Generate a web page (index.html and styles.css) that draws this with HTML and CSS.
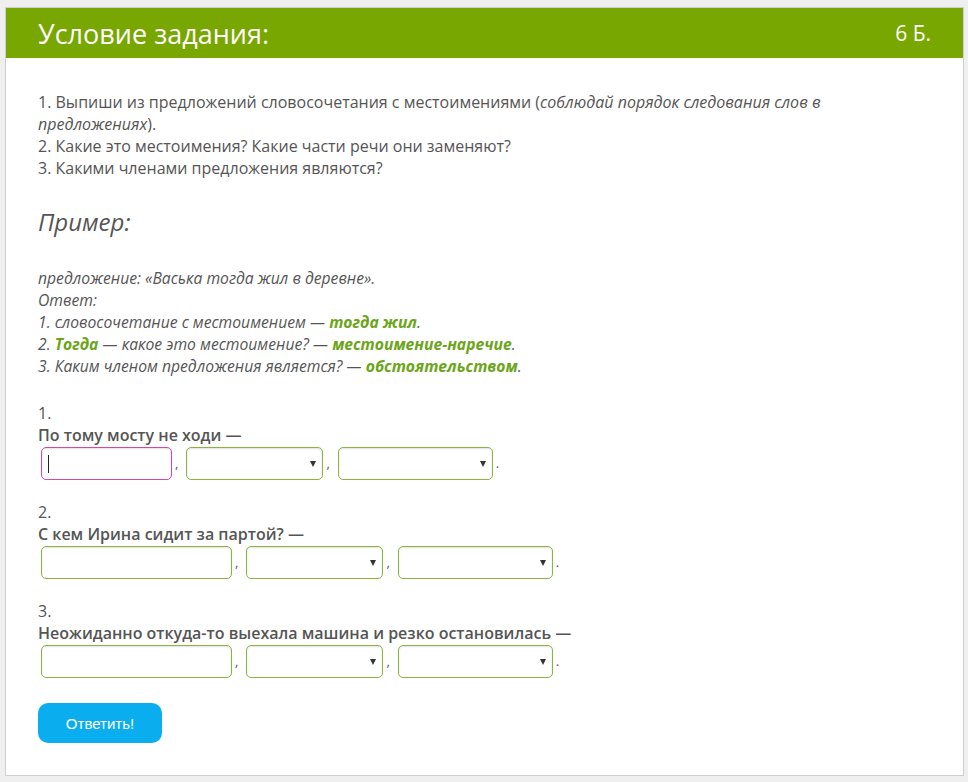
FILE: index.html
```html
<!DOCTYPE html>
<html lang="ru">
<head>
    <meta charset="UTF-8">
    <meta name="viewport" content="width=device-width, initial-scale=1.0">
    <title>Условие задания</title>
    <link rel="stylesheet" href="styles.css">
</head>
<body>
    <div class="card">
        <div class="card-head">
            <h2>Условие задания:</h2>
            <span class="points">6 Б.</span>
        </div>
        <div class="card-body">
            <p class="task">
                1. Выпиши из предложений словосочетания с местоимениями (<i>соблюдай порядок следования слов в предложениях</i>).<br>
                2. Какие это местоимения? Какие части речи они заменяют?<br>
                3. Какими членами предложения являются?
            </p>

            <h3>Пример:</h3>

            <p class="example">
                предложение: «Васька тогда жил в деревне».<br>
                Ответ:<br>
                1. словосочетание с местоимением — <b>тогда жил</b>.<br>
                2. <b>Тогда</b> — какое это местоимение? — <b>местоимение-наречие</b>.<br>
                3. Каким членом предложения является? — <b>обстоятельством</b>.
            </p>

            <div class="question">
                <div>1.</div>
                <div class="sentence">По тому мосту не ходи —</div>
                <div class="answer">
                    <span class="typing"><input type="text" class="word short active"></span>,
                    <span class="pick"><select class="small"><option></option></select></span>,
                    <span class="pick"><select class="wide"><option></option></select></span>.
                </div>
            </div>

            <div class="question">
                <div>2.</div>
                <div class="sentence">С кем Ирина сидит за партой? —</div>
                <div class="answer">
                    <input type="text" class="word">,
                    <span class="pick"><select class="small"><option></option></select></span>,
                    <span class="pick"><select class="wide"><option></option></select></span>.
                </div>
            </div>

            <div class="question">
                <div>3.</div>
                <div class="sentence">Неожиданно откуда-то выехала машина и резко остановилась —</div>
                <div class="answer">
                    <input type="text" class="word">,
                    <span class="pick"><select class="small"><option></option></select></span>,
                    <span class="pick"><select class="wide"><option></option></select></span>.
                </div>
            </div>

            <button class="send">Ответить!</button>
        </div>
    </div>
</body>
</html>
```

FILE: styles.css
```css
body {
    margin: 0;
    padding: 7px 4px 6px 5px;
    background-color: #efefef;
    font-family: "Open Sans", Arial, sans-serif;
    color: #555;
}
.card {
    background: white;
    border: 1px solid #cfcfcf;
}
.card-head {
    display: flex;
    justify-content: space-between;
    align-items: center;
    height: 50px;
    padding: 0 32px;
    background-color: #77a700;
    color: white;
}
.card-head h2 {
    margin: 0;
    font-size: 27px;
    font-weight: normal;
}
.points {
    font-size: 21px;
}
.card-body {
    padding: 33px 32px 32px 32px;
    font-size: 16px;
    line-height: 22px;
}
.task {
    margin: 0;
}
h3 {
    margin: 26px 0 28px 0;
    font-size: 24px;
    line-height: 34px;
    font-weight: normal;
    font-style: italic;
    color: #555;
}
.example {
    margin: 0 0 25px 0;
    font-style: italic;
    font-size: 15.7px;
}
.example b {
    color: #6ba51a;
}
.question {
    margin-bottom: 21px;
}
.sentence {
    font-weight: 600;
}
.answer {
    display: flex;
    align-items: center;
    height: 34px;
    padding-left: 3px;
    font-size: 13px;
}
.word, .pick select {
    box-sizing: border-box;
    height: 33px;
    border: 1px solid #8ab43f;
    border-radius: 5px;
    box-shadow: inset 0 1px 2px rgba(0, 0, 0, 0.12);
    background: white;
    font-family: inherit;
    font-size: 14px;
    padding: 0 6px;
    outline: none;
}
.word {
    display: block;
    width: 191px;
    margin-right: 3px;
}
.word.short {
    width: 131px;
}
.word.active {
    border-color: #d24aa6;
}
.typing {
    position: relative;
}
.typing::after {
    content: "";
    position: absolute;
    left: 7px;
    top: 8px;
    width: 1px;
    height: 18px;
    background: #222;
}
.pick {
    position: relative;
    margin: 0 3px 0 8px;
}
.pick select {
    appearance: none;
    -webkit-appearance: none;
    display: block;
}
.pick select.small {
    width: 137px;
}
.pick select.wide {
    width: 155px;
}
.pick::after {
    content: "";
    position: absolute;
    right: 7px;
    top: 14px;
    border-left: 3.5px solid transparent;
    border-right: 3.5px solid transparent;
    border-top: 6px solid #333;
}
.send {
    margin-top: 4px;
    width: 124px;
    height: 40px;
    border: none;
    border-radius: 10px;
    background-color: #0aaeef;
    color: white;
    font-family: "Liberation Sans", Arial, sans-serif;
    font-size: 15px;
    cursor: pointer;
}
```
